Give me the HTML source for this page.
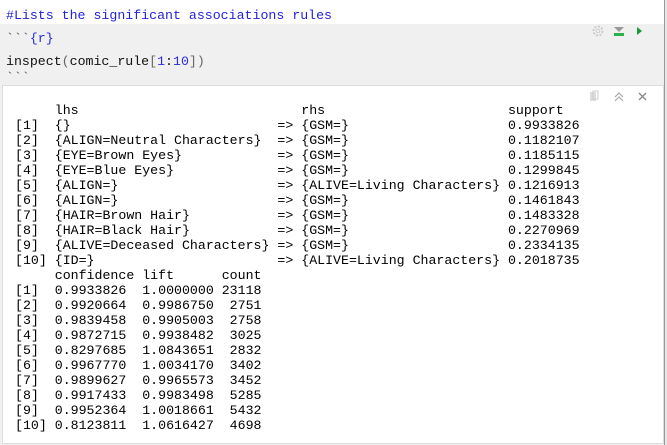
<!DOCTYPE html>
<html><head><style>
html,body{margin:0;padding:0}
body{width:667px;height:445px;background:#fff;position:relative;overflow:hidden;font-family:"Liberation Mono",monospace;font-size:13.25px}
.top{position:absolute;left:0;top:0;width:664px;height:24px;background:#fff;z-index:1}
.chunk{position:absolute;left:0;top:24px;width:664px;height:421px;background:#f0f0f0;z-index:1}
.rb{position:absolute;left:664px;top:0;width:2px;height:445px;background:#e6e6e6;border-left:1px solid #999;z-index:2}
.out{position:absolute;left:2px;top:85px;width:660px;height:357px;background:#fff;border:1px solid #ddd;z-index:3}
.t{position:absolute;white-space:pre;line-height:15px;z-index:5;margin:0;font-family:"Liberation Mono",monospace;font-size:13.25px}
.ic{position:absolute;z-index:6}
</style></head><body>
<div class="top"></div>
<div class="chunk"></div>
<div class="rb"></div>
<div class="out"></div>
<div class="t" style="left:6px;top:8px;color:#2222dd">#Lists the significant associations rules</div>
<div class="t" style="left:6px;top:31px;color:#555">&#96;&#96;&#96;<span style="color:#2a2ae0">{r}</span></div>
<div class="t" style="left:6px;top:54px;color:#111">inspect<span style="color:#666">(</span>comic_rule<span style="color:#666">[</span><span style="color:#2a2ae0">1</span>:<span style="color:#2a2ae0">10</span><span style="color:#666">])</span></div>
<div class="t" style="left:6px;top:70px;color:#555">&#96;&#96;&#96;</div>
<svg class="ic" style="left:591px;top:24px" width="60" height="16">
<circle cx="7" cy="7" r="4.5" fill="none" stroke="#ccc" stroke-width="2" stroke-dasharray="2 1.5"/><circle cx="7" cy="7" r="1.8" fill="none" stroke="#ccc"/>
<polygon points="23,3 33,3 28,8" fill="#999"/><rect x="23" y="9" width="10" height="3" fill="#2cb04a"/>
<polygon points="46,3 51,7 46,11" fill="#1a9a3a"/></svg>
<svg class="ic" style="left:586px;top:90px" width="66" height="14">
<rect x="4" y="2" width="6" height="9" fill="#ddd"/><rect x="7" y="1" width="5" height="8" fill="none" stroke="#ccc"/>
<path d="M29 7l4-4 4 4M29 11l4-4 4 4" fill="none" stroke="#aaa" stroke-width="1.2"/>
<path d="M53 3l7 7M60 3l-7 7" stroke="#888" stroke-width="1.3"/></svg>
<div class="t" style="left:15px;top:103px;color:#000">     lhs                            rhs                       support
[1]  {}                          =&gt; {GSM=}                    0.9933826
[2]  {ALIGN=Neutral Characters}  =&gt; {GSM=}                    0.1182107
[3]  {EYE=Brown Eyes}            =&gt; {GSM=}                    0.1185115
[4]  {EYE=Blue Eyes}             =&gt; {GSM=}                    0.1299845
[5]  {ALIGN=}                    =&gt; {ALIVE=Living Characters} 0.1216913
[6]  {ALIGN=}                    =&gt; {GSM=}                    0.1461843
[7]  {HAIR=Brown Hair}           =&gt; {GSM=}                    0.1483328
[8]  {HAIR=Black Hair}           =&gt; {GSM=}                    0.2270969
[9]  {ALIVE=Deceased Characters} =&gt; {GSM=}                    0.2334135
[10] {ID=}                       =&gt; {ALIVE=Living Characters} 0.2018735
     confidence lift      count
[1]  0.9933826  1.0000000 23118
[2]  0.9920664  0.9986750  2751
[3]  0.9839458  0.9905003  2758
[4]  0.9872715  0.9938482  3025
[5]  0.8297685  1.0843651  2832
[6]  0.9967770  1.0034170  3402
[7]  0.9899627  0.9965573  3452
[8]  0.9917433  0.9983498  5285
[9]  0.9952364  1.0018661  5432
[10] 0.8123811  1.0616427  4698</div>
</body></html>
